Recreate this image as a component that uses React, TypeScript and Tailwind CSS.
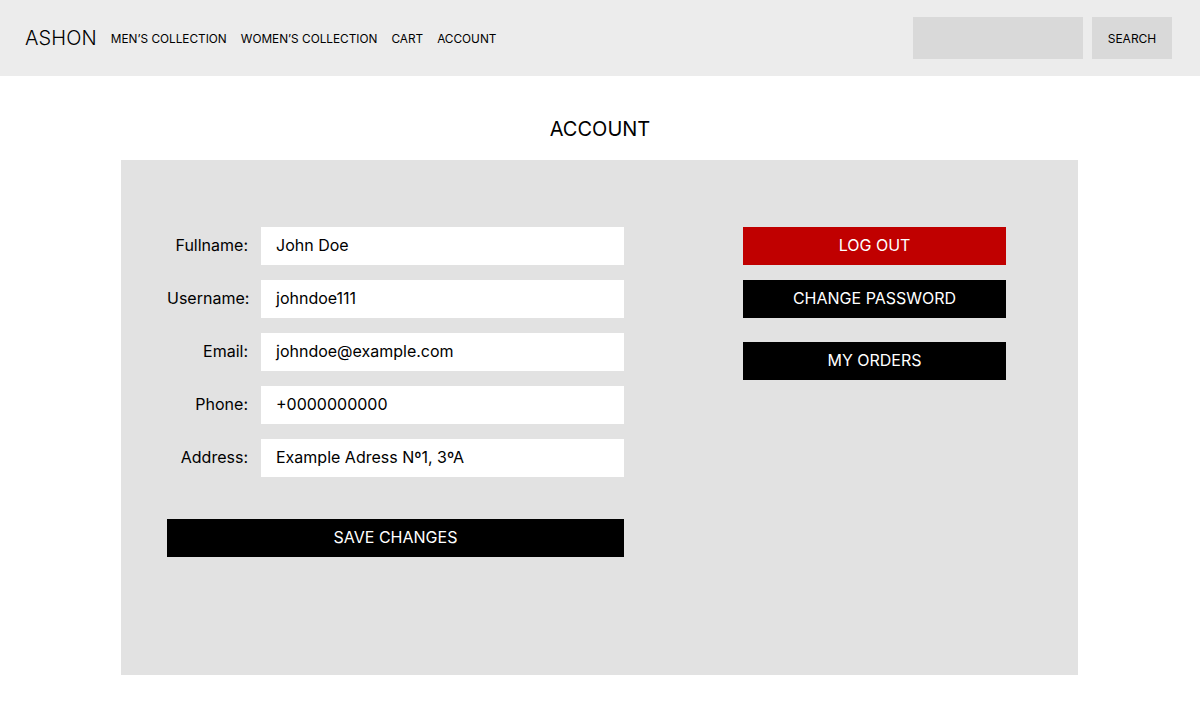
const fields = [
  { label: "Fullname:", value: "John Doe" },
  { label: "Username:", value: "johndoe111" },
  { label: "Email:", value: "johndoe@example.com" },
  { label: "Phone:", value: "+0000000000" },
  { label: "Address:", value: "Example Adress Nº1, 3ºA" },
];

const navLinks = ["MEN’S COLLECTION", "WOMEN’S COLLECTION", "CART", "ACCOUNT"];

export default function App() {
  return (
    <div className="min-h-[720px] bg-white font-['Inter',sans-serif] text-black">
      {/* Header */}
      <header className="flex h-[76px] items-center justify-between bg-[#ececec] pl-[25px] pr-[28px]">
        <div className="flex items-center">
          <span className="text-[20px] leading-none font-light tracking-[0.1px]">ASHON</span>
          <nav className="ml-[14px] flex items-center gap-[14px] pt-[3px] text-[11.8px] leading-none">
            {navLinks.map((l) => (
              <a key={l} href="#" className="whitespace-nowrap">
                {l}
              </a>
            ))}
          </nav>
        </div>
        <div className="flex items-center gap-[9px]">
          <input className="h-[42px] w-[170px] bg-[#d9d9d9] outline-none" />
          <button className="flex h-[42px] w-[80px] items-center justify-center bg-[#d9d9d9] pt-[2px] text-[12px]">
            SEARCH
          </button>
        </div>
      </header>

      {/* Title */}
      <h1 className="pt-[41px] pb-[19px] text-center text-[20px] leading-[24px]">ACCOUNT</h1>

      {/* Panel */}
      <main className="ml-[121px] flex h-[515px] w-[957px] bg-[#e2e2e2] pl-[46px] pt-[67px]">
        <div className="flex w-[457px] flex-col">
          <div className="flex flex-col gap-[15px]">
            {fields.map((f) => (
              <div key={f.label} className="flex items-center">
                <label className="w-[81px] pb-[2px] text-right text-[16px]">{f.label}</label>
                <div className="ml-[13px] flex h-[38px] w-[363px] items-center bg-white px-[15px] pb-[2px] text-[16px]">
                  {f.value}
                </div>
              </div>
            ))}
          </div>
          <button className="mt-[42px] h-[38px] w-[457px] bg-black pb-[2px] text-[16px] text-white">
            SAVE CHANGES
          </button>
        </div>

        <div className="ml-[119px] flex w-[263px] flex-col">
          <button className="h-[38px] bg-[#c00000] pb-[2px] text-[16px] text-white">LOG OUT</button>
          <button className="mt-[15px] h-[38px] bg-black pb-[2px] text-[16px] text-white">
            CHANGE PASSWORD
          </button>
          <button className="mt-[24px] h-[38px] bg-black pb-[2px] text-[16px] text-white">
            MY ORDERS
          </button>
        </div>
      </main>
    </div>
  );
}
